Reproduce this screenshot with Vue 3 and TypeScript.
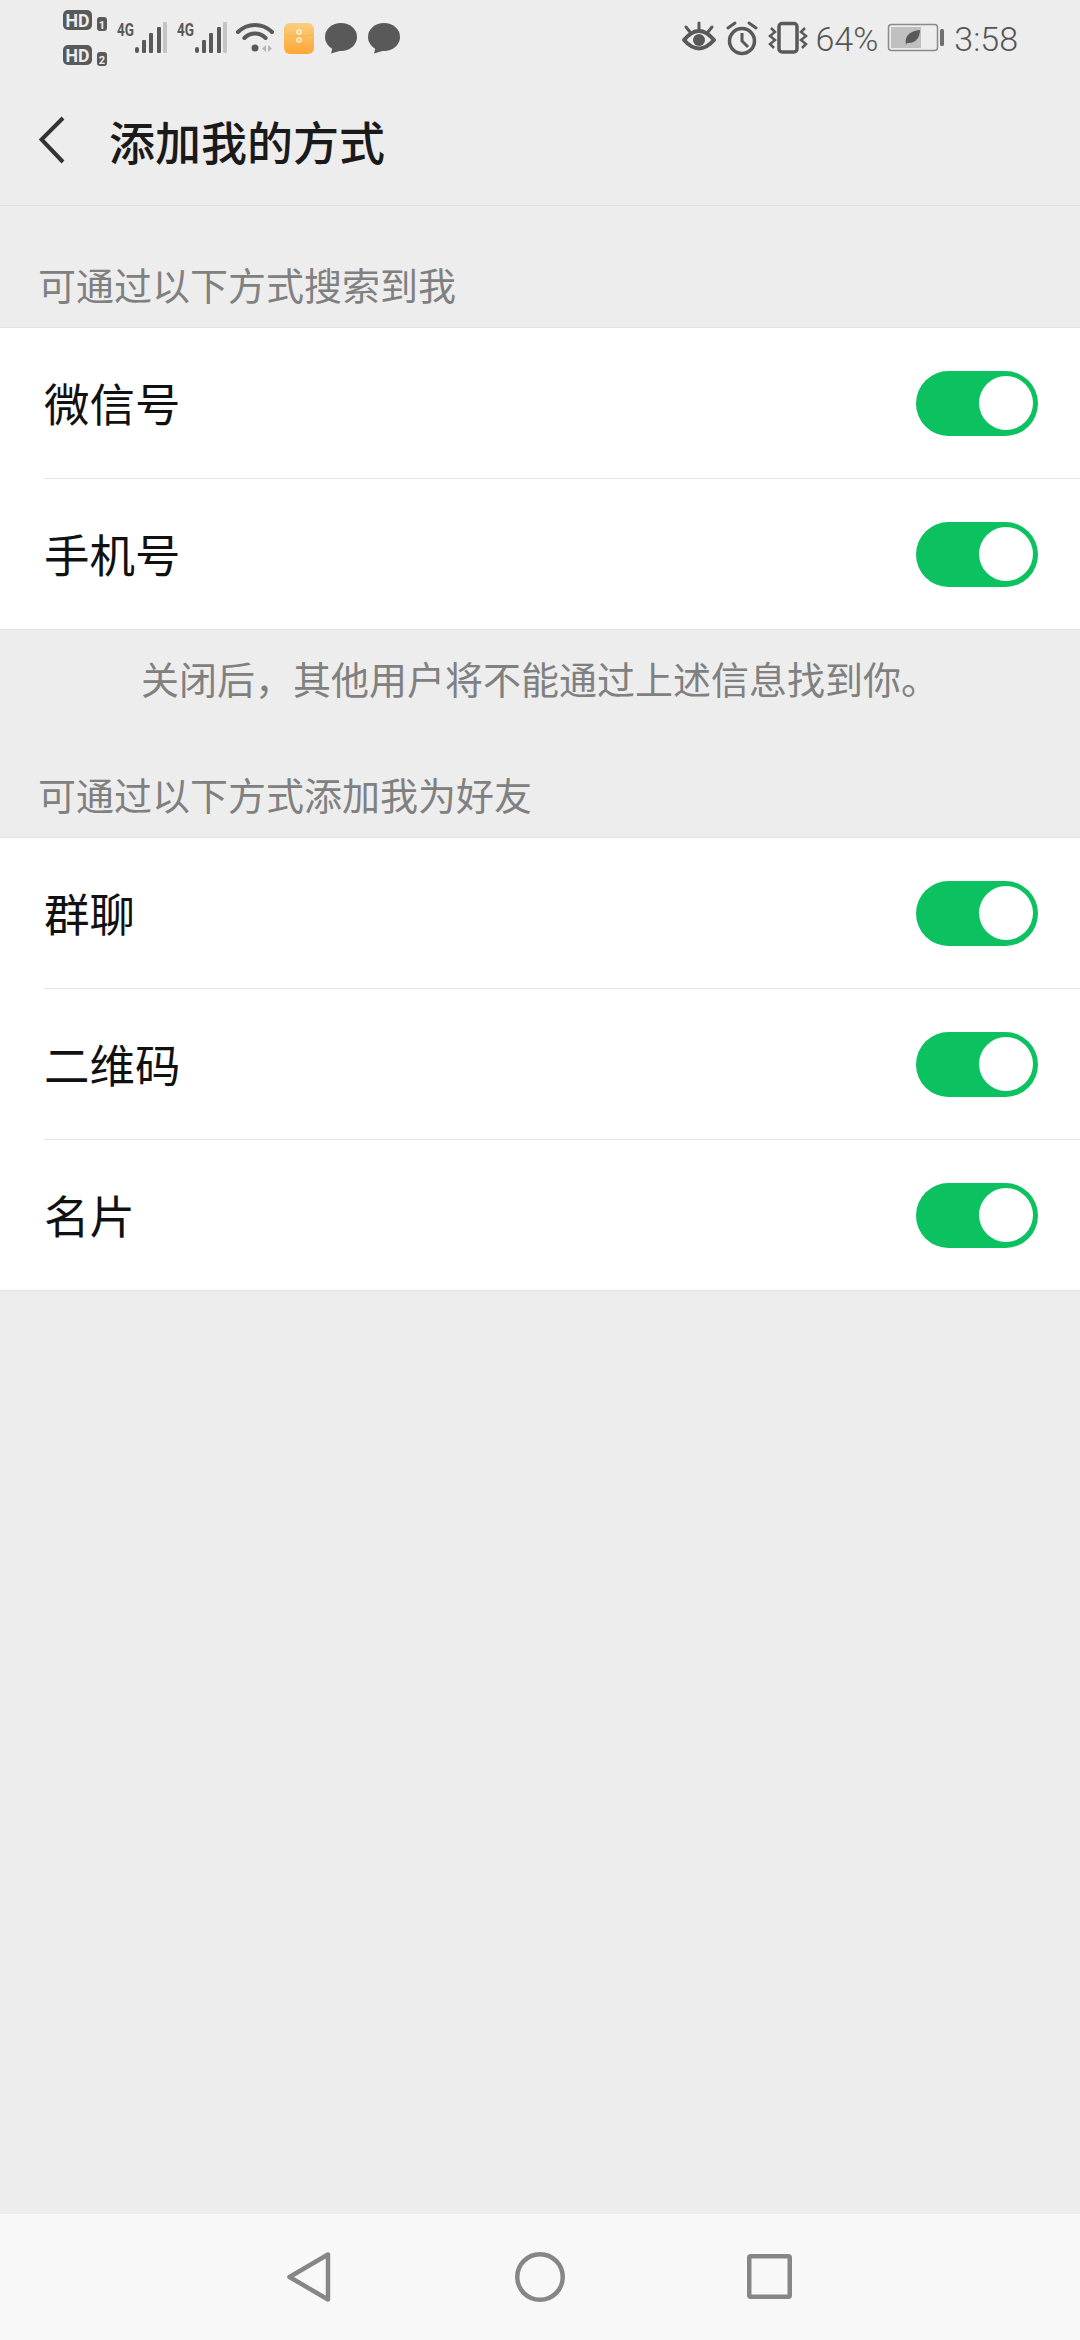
<template>
  <div class="page">
    <div class="status-bar">
      <div class="status-left">
        <svg class="ic" width="46" height="80" viewBox="0 0 46 80">
          <rect x="1" y="10" width="29" height="20" rx="5" fill="#595959" />
          <text x="3.500" y="26.500" class="hd" textLength="24" lengthAdjust="spacingAndGlyphs">HD</text>
          <rect x="35" y="17" width="10" height="14" rx="3" fill="#595959" />
          <text x="40" y="28.500" class="sim">1</text>
          <rect x="1" y="45" width="29" height="20" rx="5" fill="#595959" />
          <text x="3.500" y="61.500" class="hd" textLength="24" lengthAdjust="spacingAndGlyphs">HD</text>
          <rect x="35" y="52" width="10" height="14" rx="3" fill="#595959" />
          <text x="40" y="63.500" class="sim">2</text>
        </svg>
        <svg v-for="n in 2" :key="n" class="ic signal" width="52" height="80" viewBox="0 0 52 80">
          <text x="1" y="36" class="net" textLength="17" lengthAdjust="spacingAndGlyphs">4G</text>
          <rect x="19" y="47" width="4" height="6" rx="2" fill="#595959" />
          <rect x="26" y="40" width="4" height="13" rx="1" fill="#595959" />
          <rect x="33" y="33" width="4" height="20" rx="1" fill="#595959" />
          <rect x="41" y="27" width="4" height="26" rx="1" fill="#595959" />
          <rect x="47" y="22" width="4" height="31" rx="1" fill="#c4c4c4" />
        </svg>
        <svg class="ic wifi" width="40" height="80" viewBox="0 0 40 80">
          <path d="M3 32A24 24 0 0 1 37 32" fill="none" stroke="#595959" stroke-width="4" stroke-linecap="round" />
          <path d="M9.400 38A15 15 0 0 1 30.600 38" fill="none" stroke="#595959" stroke-width="4" stroke-linecap="round" />
          <circle cx="20" cy="48" r="3.500" fill="#595959" />
          <path d="M31 45v7l-4-3.500zM33 45v7l4-3.500z" fill="#b5b5b5" />
        </svg>
        <svg class="ic folder" width="32" height="80" viewBox="0 0 32 80">
          <defs>
            <linearGradient id="env" x1="0" y1="0" x2="0" y2="1">
              <stop offset="0" stop-color="#f9cf7f" />
              <stop offset="1" stop-color="#fda636" />
            </linearGradient>
          </defs>
          <rect x="1" y="23" width="30" height="31" rx="6" fill="url(#env)" />
          <path d="M1 34c5 3 25 3 30 0" fill="none" stroke="#f5b44f" stroke-width="1" />
          <circle cx="16" cy="32" r="2" fill="none" stroke="#fff3d6" stroke-width="1.500" />
          <circle cx="16" cy="40" r="2" fill="none" stroke="#fff3d6" stroke-width="1.500" />
        </svg>
        <svg v-for="n in 2" :key="'b' + n" class="ic bubble" width="34" height="80" viewBox="0 0 34 80">
          <ellipse cx="17" cy="37" rx="16" ry="14" fill="#595959" />
          <path d="M9 46L7 53.500L19 50z" fill="#595959" />
        </svg>
      </div>
      <div class="status-right">
        <svg class="ic" width="36" height="80" viewBox="0 0 36 80">
          <path d="M3 40Q18 22 33 40Q18 57 3 40z" fill="none" stroke="#595959" stroke-width="4" stroke-linejoin="round" />
          <circle cx="18" cy="40" r="6" fill="#595959" />
          <path d="M18 23v6M5 27l4 5M31 27l-4 5" stroke="#595959" stroke-width="3" stroke-linecap="round" />
        </svg>
        <svg class="ic alarm" width="33" height="80" viewBox="0 0 33 80">
          <circle cx="16" cy="41" r="12.500" fill="none" stroke="#595959" stroke-width="3.500" />
          <path d="M16 33v8l6 6" fill="none" stroke="#595959" stroke-width="3" />
          <path d="M2 28l7-5M30 28l-7-5" stroke="#595959" stroke-width="3" stroke-linecap="round" />
        </svg>
        <svg class="ic vib" width="40" height="80" viewBox="0 0 40 80">
          <rect x="11" y="23.500" width="18" height="28.500" rx="3" fill="none" stroke="#595959" stroke-width="3.500" />
          <path d="M3 28l4 4l-5 4l5 4l-5 4l4 4M37 28l-4 4l5 4l-5 4l5 4l-4 4" fill="none" stroke="#595959" stroke-width="2.500" />
        </svg>
        <span class="pct">64%</span>
        <svg class="ic batt" width="58" height="80" viewBox="0 0 58 80">
          <rect x="1.500" y="24.500" width="49" height="26" rx="3" fill="none" stroke="#8a8a8a" stroke-width="1.500" />
          <rect x="4" y="27" width="30" height="21" fill="#c0c0c0" />
          <path d="M19 45C17 36 23 31 33 30C33 38 28 44 20 43z" fill="#595959" />
          <rect x="53" y="29" width="4" height="17" rx="1.500" fill="#6f6f6f" />
        </svg>
        <span class="time">3:58</span>
      </div>
    </div>

    <div class="header">
      <svg class="back" width="26" height="48" viewBox="0 0 26 48">
        <path d="M24 2L2.500 23.500L24 46" fill="none" stroke="#333" stroke-width="4" />
      </svg>
      <span class="title">添加我的方式</span>
    </div>

    <template v-for="(sec, i) in sections" :key="sec.label">
      <div class="section-label" :class="{ later: i > 0 }">{{ sec.label }}</div>
      <div class="card">
        <div v-for="row in sec.rows" :key="row" class="row">
          <span class="row-name">{{ row }}</span>
          <div class="switch"><div class="knob"></div></div>
        </div>
      </div>
      <div v-if="sec.note" class="note">{{ sec.note }}</div>
    </template>

    <div class="nav">
      <svg width="60" height="60" viewBox="0 0 60 60">
        <path d="M48 7.500V52.500L9.500 30z" fill="none" stroke="#868686" stroke-width="4.500" stroke-linejoin="round" />
      </svg>
      <svg width="60" height="60" viewBox="0 0 60 60">
        <circle cx="30" cy="30" r="22.750" fill="none" stroke="#868686" stroke-width="4.500" />
      </svg>
      <svg width="60" height="60" viewBox="0 0 60 60">
        <rect x="9.250" y="9.250" width="40.500" height="40.500" rx="1.500" fill="none" stroke="#868686" stroke-width="4.500" />
      </svg>
    </div>
  </div>
</template>

<script setup lang="ts">
interface Section {
  label: string;
  rows: string[];
  note?: string;
}

const sections: Section[] = [
  {
    label: '可通过以下方式搜索到我',
    rows: ['微信号', '手机号'],
    note: '关闭后，其他用户将不能通过上述信息找到你。',
  },
  {
    label: '可通过以下方式添加我为好友',
    rows: ['群聊', '二维码', '名片'],
  },
];
</script>

<style>
body {
  margin: 0;
  background: #ededed;
}
</style>

<style scoped>
.page {
  width: 1080px;
  height: 2340px;
  display: flex;
  flex-direction: column;
  background: #ededed;
  font-family: "Noto Sans CJK SC", "Noto Sans", sans-serif;
  overflow: hidden;
}

.status-bar {
  height: 80px;
  flex: none;
  display: flex;
  justify-content: space-between;
  padding: 0 62px;
  box-sizing: border-box;
}
.status-left,
.status-right {
  display: flex;
  align-items: center;
}
.ic {
  display: block;
  flex: none;
}
.signal {
  margin-left: 8px;
}
.wifi {
  margin-left: 7px;
}
.folder {
  margin-left: 8px;
}
.bubble {
  margin-left: 9px;
}
.alarm {
  margin-left: 9px;
}
.vib {
  margin-left: 9px;
}
.hd {
  font: 700 18px "Roboto", sans-serif;
  fill: #ededed;
}
.sim {
  font: 700 11px "Roboto", sans-serif;
  fill: #ededed;
  text-anchor: middle;
}
.net {
  font: 700 19px "Roboto", sans-serif;
  fill: #595959;
}
.pct,
.time {
  font: 300 34px "Roboto", sans-serif;
  color: #555;
  line-height: 78px;
  height: 80px;
}
.pct {
  margin-left: 7px;
}
.batt {
  margin-left: 9px;
}
.time {
  margin-left: 9px;
}

.header {
  height: 126px;
  flex: none;
  display: flex;
  align-items: center;
  padding-left: 39px;
  box-sizing: border-box;
  border-bottom: 1px solid #e2e2e2;
}
.back {
  margin-bottom: 6px;
}
.title {
  margin-left: 44px;
  margin-bottom: 6px;
  font-size: 46px;
  font-weight: 500;
  color: #1a1a1a;
}

.section-label {
  height: 50px;
  line-height: 50px;
  padding: 53px 0 18px 38px;
  font-size: 38px;
  color: #808080;
  flex: none;
}
.section-label.later {
  padding-top: 51px;
  padding-bottom: 18px;
}

.card {
  background: #fff;
  border-top: 1px solid #e2e2e2;
  border-bottom: 1px solid #e2e2e2;
  flex: none;
}
.row {
  height: 151px;
  margin-left: 44px;
  padding-right: 42px;
  box-sizing: border-box;
  display: flex;
  align-items: center;
  justify-content: space-between;
  border-bottom: 1px solid #e5e5e5;
}
.row:last-child {
  height: 150px;
  border-bottom: none;
}
.row-name {
  margin-bottom: 2px;
  font-size: 45.500px;
  color: #111;
}
.switch {
  width: 122px;
  height: 65px;
  border-radius: 33px;
  background: #0cc160;
  display: flex;
  align-items: center;
  justify-content: flex-end;
  padding-right: 5px;
  box-sizing: border-box;
}
.knob {
  width: 54px;
  height: 54px;
  border-radius: 50%;
  background: #fff;
}

.note {
  height: 50px;
  line-height: 50px;
  margin-top: 23px;
  margin-bottom: 15px;
  text-align: center;
  font-size: 38px;
  color: #808080;
  flex: none;
}

.nav {
  margin-top: auto;
  height: 126px;
  flex: none;
  background: #f8f8f8;
  display: flex;
  align-items: center;
  justify-content: center;
  gap: 170px;
}
</style>
